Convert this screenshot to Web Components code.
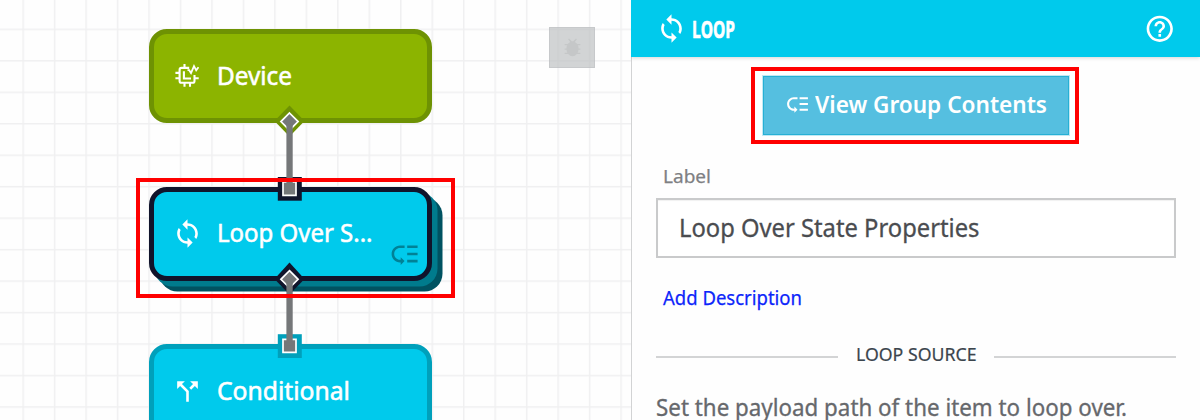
<!DOCTYPE html>
<html lang="en">
<head>
<meta charset="utf-8">
<title>Workflow editor</title>
<style>
html,body{margin:0;height:100%}
body{width:1200px;height:420px;overflow:hidden;background:#fff;font-family:"Noto Sans","Open Sans",sans-serif}
</style>
</head>
<body>
<workflow-app></workflow-app>
<script>
const ICONS = {
  loop: '<path d="M12 4V1L8 5l4 4V6c3.31 0 6 2.69 6 6 0 1.01-.25 1.97-.7 2.8l1.46 1.46C19.54 15.03 20 13.57 20 12c0-4.42-3.58-8-8-8zm0 14c-3.31 0-6-2.69-6-6 0-1.01.25-1.97.7-2.8L5.24 7.74C4.46 8.97 4 10.43 4 12c0 4.42 3.58 8 8 8v3l4-4-4-4v3z"/>',
  split: '<path d="M14 4l2.29 2.29-2.88 2.88 1.42 1.42 2.88-2.88L20 10V4zm-4 0H4v6l2.29-2.29 4.71 4.7V20h2v-8.41l-5.29-5.3z"/>',
  group: '<path d="M14 5h8v2h-8zm0 5.500h8v2h-8zm0 5.500h8v2h-8zM2 11.500C2 15.080 4.920 18 8.500 18H9v2l3-3-3-3v2h-.5C6.020 16 4 13.980 4 11.500S6.020 7 8.500 7H12V5H8.500C4.920 5 2 7.920 2 11.500z"/>',
  help: '<path d="M11 18h2v-2h-2v2zm1-16C6.48 2 2 6.48 2 12s4.48 10 10 10 10-4.48 10-10S17.52 2 12 2zm0 18c-4.41 0-8-3.59-8-8s3.59-8 8-8 8 3.59 8 8-3.59 8-8 8zm0-14c-2.21 0-4 1.79-4 4h2c0-1.1.9-2 2-2s2 .9 2 2c0 2-3 1.75-3 5h2c0-2.250 3-2.500 3-5 0-2.210-1.790-4-4-4z"/>',
  device: '<g fill="none" stroke="currentColor" stroke-width="2.100"><path d="M14.200 4.900H6.500Q4.600 4.900 4.600 6.800V17.900Q4.600 19.800 6.500 19.800H17.600Q19.500 19.800 19.500 17.900V12"/><path d="M8.900 8.300V15.500H16"/><path d="M9.500 1V5M9.500 20V23.800M15 20V23.800M.4 9.900H4M.4 15.200H4M20 15.200H23.700"/><path d="M12.500 7.200H14.200L16 10L19 3.100L21.200 7.400L23.500 4.200" stroke-width="1.800"/></g>',
  bug: '<ellipse cx="12" cy="13.500" rx="7" ry="8.500"/><path d="M3 8h18v1.500H3zM3 13h18v1.500H3zM3 18h18v1.500H3zM7 2.500l3 4h4l3-4-1-.7L12.500 5h-1L8 1.800z"/>'
};
const define = (name, html, setup) => {
  const t = document.createElement('template');
  t.innerHTML = html;
  customElements.define(name, class extends HTMLElement {
    connectedCallback() {
      if (this.shadowRoot) return;
      this.attachShadow({mode: 'open'}).append(t.content.cloneNode(true));
      if (setup) setup.call(this, this.shadowRoot);
    }
  });
};

define('ui-icon', `<style>:host{display:block;flex:none}svg{display:block;width:100%;height:100%;fill:currentColor}</style><svg viewBox="0 0 24 24"></svg>`, function(r){
  const s = this.getAttribute('size');
  this.style.width = this.style.height = s + 'px';
  r.querySelector('svg').innerHTML = ICONS[this.getAttribute('name')];
});

/* One line of text condensed to the given width. */
define('fit-text', `<style>:host{display:block;flex:none;white-space:nowrap}span{display:inline-block;transform-origin:0 50%}</style><span><slot></slot></span>`, function(r){
  const w = +this.getAttribute('width'), span = r.querySelector('span');
  this.style.width = w + 'px';
  span.style.transform = 'scaleX(' + w / span.getBoundingClientRect().width + ')';
});

customElements.define('flow-step', class extends HTMLElement {
  connectedCallback() {
    const a = n => this.getAttribute(n);
    this.attachShadow({mode:'open'}).innerHTML = `<style>
:host{display:block;position:absolute;left:149px;width:283px;height:94px;color:#fff;--fill:#00caec;--edge:#00a0bb}
:host([kind=device]){--fill:#8cb400;--edge:#6e9203}
:host([selected]){--edge:#10142b}
.box{box-sizing:border-box;height:100%;border:5px solid var(--edge);border-radius:18px;background:var(--fill);display:flex;align-items:center;padding-left:18px}
:host([selected]) .box{box-shadow:5.500px 5.500px 0 #007b8d,10.500px 10.500px 0 #005261}
fit-text{font-size:25px;line-height:34px;-webkit-text-stroke:.55px currentColor;padding-bottom:2.500px;margin-left:13.500px}
.badge{position:absolute;right:12px;bottom:10px;color:#008196}
.dev{margin:0 4.500px 2px 2.500px}
</style><div class="box"><ui-icon class="${a('icon-size') ? 'dev' : ''}" name="${a('icon')}" size="${a('icon-size') || 31}"></ui-icon><fit-text width="${a('text-width')}">${a('label')}</fit-text></div>
${this.hasAttribute('selected') ? '<ui-icon class="badge" name="group" size="31.2"></ui-icon>' : ''}`;
  }
});

define('flow-links', `<style>:host{display:block;position:absolute;inset:0}svg{display:block}</style>
<svg width="631" height="420">
<path d="M289.500 105.500l15 15.500-15 15.500-15-15.500z" fill="#6e9203"/>
<path d="M289.500 262.500l15 16.500-15 15.500-15-15.500z" fill="#10142b"/>
<path d="M277.800 177h24v23.700h-24z" fill="#10142b"/>
<path d="M277.800 334.200h24v23.800h-24z" fill="#00a0bb"/>
<g fill="#757779" stroke="#fff" stroke-width="1.700">
<path d="M289.500 113l8.600 8.600-8.600 8.600-8.600-8.600z"/>
<path d="M289.500 270.700l8.600 8.600-8.600 8.600-8.600-8.600z"/>
<path d="M283 182h13v13.300h-13z"/><path d="M283 339.400h13v13h-13z"/></g>
<path d="M286.400 122h6.300v66h-6.300zM286.400 279.500h6.300v66h-6.300z" fill="#757779"/>
</svg>`);

define('flow-canvas', `<style>
:host{display:block;position:relative;width:631px;height:420px;overflow:hidden;background:#fefefe}
.grid{display:block}
.debug{position:absolute;left:549px;top:27px;width:46px;height:40.500px;box-sizing:border-box;border:1px solid rgba(190,192,194,.55);background:rgba(188,191,193,.68);display:flex;align-items:center;justify-content:center;color:#c5c7c8}
.mark{position:absolute;left:136px;top:178px;width:319px;height:120px;box-sizing:border-box;border:4px solid #f00}
</style>
<svg class="grid" width="631" height="420"><defs><pattern id="g" x="22.400" y="28.600" width="31.470" height="31.470" patternUnits="userSpaceOnUse"><path d="M0 0H31.470V1.500H0zM0 0H1.500V31.470H0z" fill="#f0f0f1"/></pattern></defs><rect width="631" height="420" fill="url(#g)"/></svg>
<div class="debug"><ui-icon name="bug" size="21"></ui-icon></div>
<flow-step kind="device" icon="device" icon-size="24" label="Device" text-width="75" style="top:29px"></flow-step>
<flow-step selected icon="loop" label="Loop Over S..." text-width="155.5" style="top:186.500px"></flow-step>
<flow-step icon="split" label="Conditional" text-width="133" style="top:344px"></flow-step>
<flow-links></flow-links>
<div class="mark"></div>`);

define('panel-header', `<style>
:host{display:flex;flex:none;align-items:center;height:57px;box-sizing:border-box;padding:0 25px 0 25px;background:#00caec;color:#fff;box-shadow:0 1px 4px rgba(0,0,0,.16);position:relative}
fit-text{font:700 23.500px/32px "Open Sans","Noto Sans",sans-serif;-webkit-text-stroke:.7px currentColor;margin-left:5px}
.help{margin-left:auto}
</style><ui-icon name="loop" size="31"></ui-icon><fit-text width="43"><slot></slot></fit-text><ui-icon class="help" name="help" size="31.500"></ui-icon>`);

define('group-button', `<style>
:host{display:block;flex:none;width:328px;height:77px;box-sizing:border-box;border:4px solid #f00;padding:5px 6px 4.500px 8px}
button{font:inherit;color:#fff;width:306px;height:59px;box-sizing:border-box;border:1px solid #26b0d5;outline:1px solid rgba(84,191,224,.35);border-radius:0;background:#55bfe0;padding:0 0 3px 21px;display:flex;align-items:center}
fit-text{font-size:24px;line-height:34px;font-weight:600;margin-left:5px;padding-bottom:1px}
</style><button><ui-icon name="group" size="25"></ui-icon><fit-text width="232"><slot></slot></fit-text></button>`);

define('label-field', `<style>
:host{display:block;flex:none}
.label{font-size:18.500px;line-height:26px;color:#7e8083;margin-left:7px;-webkit-text-stroke:.25px currentColor}
.input{box-sizing:border-box;height:60px;border:2px solid #c9cacb;background:#fff;margin-top:9px;padding:0 0 1px 21px;display:flex;align-items:center;color:#4a4c50;box-shadow:inset 0 1px 1px rgba(0,0,0,.06)}
.input fit-text{font-size:24.500px;line-height:34px;-webkit-text-stroke:.3px currentColor}
</style><fit-text class="label" width="48">Label</fit-text><div class="input"><fit-text width="300.5"><slot></slot></fit-text></div>`);

define('section-title', `<style>
:host{display:flex;flex:none;align-items:center;gap:18px;color:#3b454d}
i{flex:1;height:2px;background:#d3d4d5;margin-top:4px}
fit-text{font-size:18.700px;line-height:26px;padding-bottom:1px;-webkit-text-stroke:.2px currentColor}
</style><i></i><fit-text width="120.5"><slot></slot></fit-text><i></i>`);

define('detail-panel', `<style>
:host{display:flex;flex-direction:column;width:569px;height:420px;background:#fefefe;overflow:hidden}
.body{flex:1;min-height:0;box-sizing:border-box;border-left:1px solid #d2d3d4;padding:10px 24.500px 0 24px;display:flex;flex-direction:column}
group-button{margin-left:95px}
label-field{margin-top:19px}
.add{font-size:19.500px;line-height:26px;color:#0c25fa;margin:27px 0 0 7px;-webkit-text-stroke:.25px currentColor}
section-title{margin-top:30px}
.text{font-size:23px;line-height:34px;color:#66686c;margin-top:22px;-webkit-text-stroke:.3px currentColor}
</style>
<panel-header>LOOP</panel-header>
<div class="body">
<group-button>View Group Contents</group-button>
<label-field>Loop Over State Properties</label-field>
<fit-text class="add" width="139">Add Description</fit-text>
<section-title>LOOP SOURCE</section-title>
<fit-text class="text" width="471">Set the payload path of the item to loop over.</fit-text>
</div>`);

define('workflow-app', `<style>:host{display:grid;grid-template-columns:631px 569px;height:420px;overflow:hidden}</style><flow-canvas></flow-canvas><detail-panel></detail-panel>`);
</script>
</body>
</html>
